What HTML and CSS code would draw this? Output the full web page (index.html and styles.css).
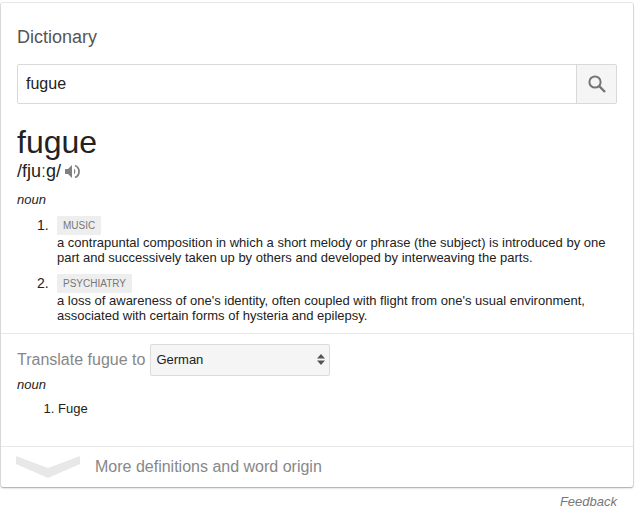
FILE: index.html
```html
<!DOCTYPE html>
<html lang="en">
<head>
<meta charset="utf-8">
<title>Dictionary</title>
<link rel="stylesheet" href="styles.css">
</head>
<body>
<div class="card">
  <section class="main">
    <h2 class="heading">Dictionary</h2>
    <div class="search">
      <div class="search-input">fugue</div>
      <div class="search-btn">
        <svg width="18" height="18" viewBox="0 0 18 18"><circle cx="7" cy="7" r="5.6" fill="none" stroke="#757575" stroke-width="2"/><path d="M11.2 11.2L17 17" stroke="#757575" stroke-width="2.4" fill="none"/></svg>
      </div>
    </div>
    <div class="word">fugue</div>
    <div class="phonetic"><span>/fjuːg/</span>
      <svg class="speaker" width="15" height="15" viewBox="0 0 15 15"><path d="M0 5h3l4-4v13l-4-4H0z" fill="#808080"/><path d="M9 4.5a4 4 0 0 1 0 6z" fill="#808080"/><path d="M10 1.5a6.5 6.5 0 0 1 0 12" fill="none" stroke="#808080" stroke-width="1.8"/></svg>
    </div>
    <div class="pos">noun</div>
    <ol class="defs">
      <li class="def">
        <span class="num">1.</span>
        <div class="def-body">
          <span class="tag">MUSIC</span>
          <div class="def-text">a contrapuntal composition in which a short melody or phrase (the subject) is introduced by one part and successively taken up by others and developed by interweaving the parts.</div>
        </div>
      </li>
      <li class="def">
        <span class="num">2.</span>
        <div class="def-body">
          <span class="tag">PSYCHIATRY</span>
          <div class="def-text">a loss of awareness of one's identity, often coupled with flight from one's usual environment, associated with certain forms of hysteria and epilepsy.</div>
        </div>
      </li>
    </ol>
  </section>
  <section class="translate">
    <div class="translate-row">
      <span class="translate-label">Translate fugue to</span>
      <div class="select">German
        <svg width="8" height="11" viewBox="0 0 8 11"><path d="M4 0L8 4.5H0zM4 11L0 6.5H8z" fill="#555"/></svg>
      </div>
    </div>
    <div class="pos pos-small">noun</div>
    <ol class="trans-list"><li>Fuge</li></ol>
  </section>
  <section class="more">
    <svg width="66" height="22" viewBox="0 0 66 22"><path d="M0 0L32 12L64 0V8L32 22L0 8z" fill="#e8e8e8"/></svg>
    <span class="more-text">More definitions and word origin</span>
  </section>
</div>
<div class="feedback">Feedback</div>
</body>
</html>
```

FILE: styles.css
```css
* { box-sizing: border-box; }
html, body { margin: 0; background: #fff; }
body {
  width: 641px;
  height: 513px;
  overflow: hidden;
  padding: 3px 8px 0 1px;
  font-family: "Liberation Sans", Arial, sans-serif;
  color: #222;
}
.card {
  background: #fff;
  height: 484px;
  border-radius: 2px;
  box-shadow: 0 1px 2px rgba(0,0,0,.3), 0 0 0 1px rgba(0,0,0,.08);
  display: flex;
  flex-direction: column;
}
.main { padding: 0 16px; height: 330px; }
.heading {
  margin: 0;
  padding-top: 24px;
  font-size: 18px;
  line-height: 20px;
  font-weight: normal;
  color: #555;
}
.search {
  margin-top: 17px;
  height: 40px;
  display: flex;
  border: 1px solid #d9d9d9;
  border-radius: 2px;
}
.search-input {
  flex: 1;
  padding-left: 8px;
  font-size: 16px;
  line-height: 37px;
  color: #222;
}
.search-btn {
  width: 40px;
  background: #f5f5f5;
  border-left: 1px solid #d9d9d9;
  display: flex;
  align-items: center;
  justify-content: center;
}
.word {
  margin-top: 20px;
  font-size: 32px;
  line-height: 36px;
  color: #222;
}
.phonetic {
  display: flex;
  align-items: center;
  gap: 4px;
  margin-top: 1px;
  font-size: 18px;
  line-height: 20px;
}
.pos {
  margin-top: 11px;
  font-size: 13px;
  line-height: 16px;
  font-style: italic;
  color: #222;
}
.defs { margin: 8px 0 0; padding: 0 0 0 20px; list-style: none; font-size: 13px; }
.def { display: flex; padding-bottom: 9px; }
.num { width: 20px; font-size: 14px; line-height: 19px; flex: none; }
.def-body { flex: 1; }
.tag {
  display: block;
  width: fit-content;
  background: #eee;
  color: #777;
  font-size: 10px;
  line-height: 19px;
  padding: 0 6px;
  border-radius: 1px;
}
.def-text { font-size: 13px; line-height: 15px; }
.translate {
  border-top: 1px solid #e8e8e8;
  padding: 10px 16px 0;
  height: 113px;
}
.translate-row { display: flex; align-items: center; gap: 5px; }
.translate-label { font-size: 16px; color: #878787; }
.select {
  width: 180px;
  height: 32px;
  background: #f5f5f5;
  border: 1px solid #dcdcdc;
  border-radius: 2px;
  font-size: 13px;
  color: #222;
  display: flex;
  align-items: center;
  justify-content: space-between;
  padding: 0 4px 2px 5px;
}
.pos-small { margin-top: 1px; }
.trans-list { margin: 8px 0 0; padding-left: 41px; font-size: 13px; line-height: 16px; }
.more {
  flex: 1;
  border-top: 1px solid #e8e8e8;
  display: flex;
  align-items: center;
  gap: 13px;
  padding-left: 15px;
}
.more-text { font-size: 16px; color: #878787; }
.feedback {
  margin-top: 7px;
  padding-right: 16px;
  text-align: right;
  font-size: 13px;
  font-style: italic;
  color: #777;
}
```
